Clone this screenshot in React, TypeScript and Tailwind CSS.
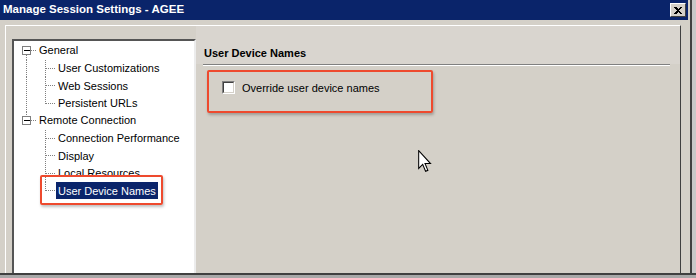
import React from "react";

const F = { fontFamily: '"Liberation Sans", Arial, sans-serif' };

function TopRow({ label, first, last }: { label: string; first?: boolean; last?: boolean }) {
  return (
    <div className="flex h-[17.5px] items-center">
      <svg width="23" height="17.5" className="shrink-0" shapeRendering="crispEdges">
        {!first && <line x1="12.5" y1="0" x2="12.5" y2="4.5" stroke="#808080" strokeDasharray="1 1" />}
        {!last && <line x1="12.5" y1="13" x2="12.5" y2="17.5" stroke="#808080" strokeDasharray="1 1" />}
        <rect x="8.5" y="4.5" width="8" height="8" fill="#fff" stroke="#7f7f7f" />
        <line x1="10" y1="8.5" x2="15.5" y2="8.5" stroke="#000" />
        <line x1="17" y1="8.5" x2="23" y2="8.5" stroke="#808080" strokeDasharray="1 1" />
      </svg>
      <span className="px-[2px] text-[11px] leading-[13px] text-black" style={F}>{label}</span>
    </div>
  );
}

function ChildRow({ label, parentMore, last, selected }: { label: string; parentMore?: boolean; last?: boolean; selected?: boolean }) {
  return (
    <div className="flex h-[17.5px] items-center">
      <svg width="42" height="17.5" className="shrink-0" shapeRendering="crispEdges">
        {parentMore && <line x1="12.5" y1="0" x2="12.5" y2="17.5" stroke="#808080" strokeDasharray="1 1" />}
        <line x1="31.5" y1="0" x2="31.5" y2={last ? 9 : 17.5} stroke="#808080" strokeDasharray="1 1" />
        <line x1="32" y1="8.5" x2="42" y2="8.5" stroke="#808080" strokeDasharray="1 1" />
      </svg>
      <span
        className={`flex h-[17px] items-center px-[2px] text-[11px] ${selected ? "bg-[#0a246a] text-white" : "text-black"}`}
        style={F}
      >
        {label}
      </span>
    </div>
  );
}

export default function App() {
  return (
    <div className="relative flex h-[278px] w-[696px] flex-col overflow-hidden bg-[#a8a8a8]">
      <div className="flex h-[273px]">
        <div className="flex w-[690px] flex-col bg-[#d4d0c8]">
          {/* title bar */}
          <div className="mr-[2px] flex h-[20px] shrink-0 items-center justify-between bg-[#0a246a] pl-[3px] pr-[2px]">
            <span className="text-[11.5px] font-bold text-white" style={F}>
              Manage Session Settings - AGEE
            </span>
            <div className="flex h-[14px] w-[16px] items-center justify-center border-t border-l border-t-white border-l-white border-r border-b border-r-[#404040] border-b-[#404040] bg-[#d4d0c8]">
              <svg width="8" height="7" viewBox="0 0 8 7" shapeRendering="crispEdges">
                <path d="M0 0h2l2 2 2-2h2L5 3.5 8 7H6L4 5 2 7H0l3-3.5z" fill="#000" />
              </svg>
            </div>
          </div>
          {/* body */}
          <div className="flex min-h-0 flex-1 pl-[5px] pr-[9px] pt-[5px]">
            <div className="flex min-h-0 flex-1 border-t border-l border-r border-t-white border-l-white border-r-[#404040]">
              {/* tree */}
              <div className="ml-[6px] mt-[13px] w-[184px] shrink-0 border-t-2 border-l-2 border-r-2 border-t-[#555] border-l-[#555] border-r-[#ececec] bg-white pt-[1px]">
                <TopRow label="General" first />
                <ChildRow label="User Customizations" parentMore />
                <ChildRow label="Web Sessions" parentMore />
                <ChildRow label="Persistent URLs" parentMore last />
                <TopRow label="Remote Connection" last />
                <ChildRow label="Connection Performance" />
                <ChildRow label="Display" />
                <ChildRow label="Local Resources" />
                <ChildRow label="User Device Names" last selected />
              </div>
              {/* right panel */}
              <div className="flex min-w-0 flex-1 flex-col">
                <div className="h-[38px] bg-[#d9d5cf] pl-[8px] pt-[13px]">
                  <span className="text-[11px] font-bold text-black" style={F}>User Device Names</span>
                </div>
                <div className="ml-[7px] mr-[10px] h-[2px] border-t border-b border-t-[#808080] border-b-white" />
                <div className="ml-[11px] mt-[4px] flex h-[43px] w-[226px] items-start rounded-[2px] border-2 border-[#ee4a2e] pl-[13px] pt-[9px] shadow-[1px_2px_3px_rgba(0,0,0,0.25)]">
                  <div className="h-[13px] w-[13px] border-t border-l border-t-[#808080] border-l-[#808080] border-r border-b border-r-white border-b-white">
                    <div className="h-full w-full border-t border-l border-t-[#404040] border-l-[#404040] border-r border-b border-r-[#d4d0c8] border-b-[#d4d0c8] bg-white" />
                  </div>
                  <span className="ml-[7px] mt-[-1px] text-[11px] text-black" style={F}>Override user device names</span>
                </div>
              </div>
            </div>
          </div>
        </div>
        <div className="w-[6px] border-l-2 border-l-[#404040] bg-[#c8c8c8]" />
      </div>
      <div className="h-[5px] border-t-2 border-t-[#404040] bg-[#a8a8a8]" />

      {/* annotation around tree selection */}
      <div className="absolute left-[40px] top-[175px] h-[30px] w-[123px] rounded-[2px] border-2 border-[#ee4a2e] shadow-[1px_2px_3px_rgba(0,0,0,0.25)]" />

      {/* mouse cursor */}
      <svg className="absolute left-[418px] top-[150px]" width="14" height="23" viewBox="0 0 12 20">
        <path d="M0.5 0.5 L0.5 16 L4 12.5 L6.5 18.5 L8.5 17.7 L6 11.8 L10.8 11.8 Z" fill="#fff" stroke="#000" strokeWidth="0.9" strokeLinejoin="miter" />
      </svg>
    </div>
  );
}
